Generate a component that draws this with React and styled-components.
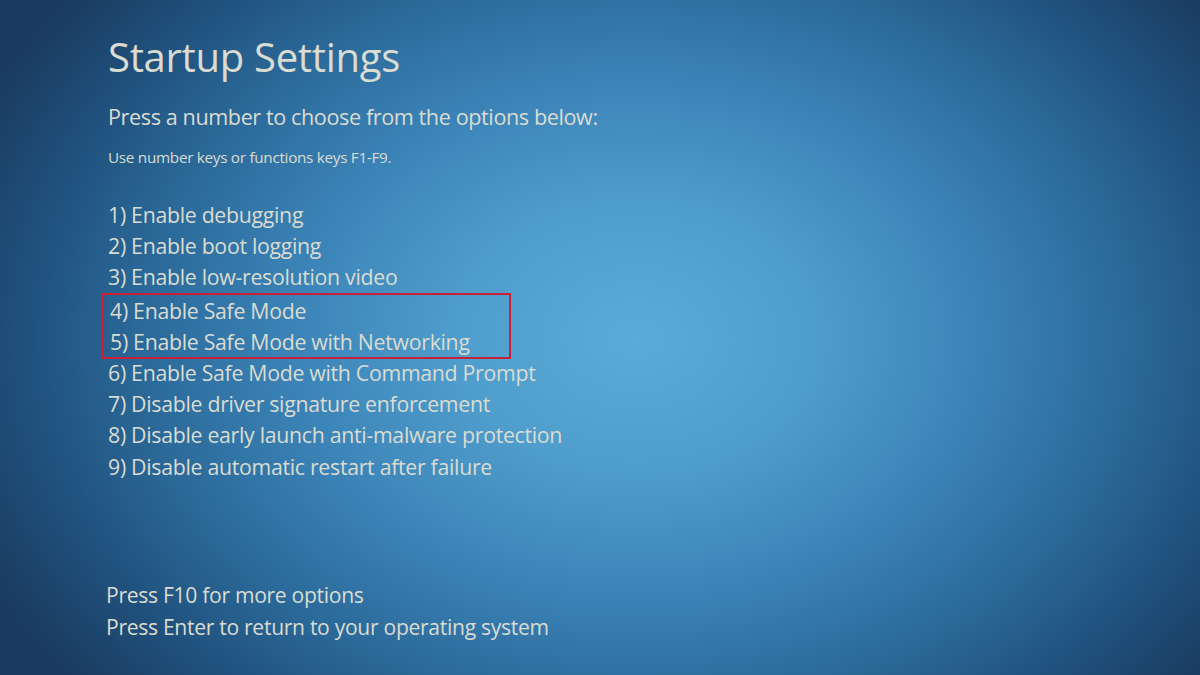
import React from 'react';
import styled, { createGlobalStyle } from 'styled-components';

const GlobalStyle = createGlobalStyle`
    html, body {
        margin : 0;
        padding : 0;
        background : #1c4468;
    }
    * {
        box-sizing : border-box;
    }
`;

const options = [
    { key: 1, label: 'Enable debugging' },
    { key: 2, label: 'Enable boot logging' },
    { key: 3, label: 'Enable low-resolution video' },
    { key: 4, label: 'Enable Safe Mode', marked: true },
    { key: 5, label: 'Enable Safe Mode with Networking', marked: true },
    { key: 6, label: 'Enable Safe Mode with Command Prompt' },
    { key: 7, label: 'Disable driver signature enforcement' },
    { key: 8, label: 'Disable early launch anti-malware protection' },
    { key: 9, label: 'Disable automatic restart after failure' },
];

const App = () => {
    const before = options.filter((o) => o.key < 4);
    const marked = options.filter((o) => o.marked);
    const after = options.filter((o) => o.key > 5);

    return (
        <>
            <GlobalStyle />
            <Screen>
                <Title>Startup Settings</Title>
                <Lead>Press a number to choose from the options below:</Lead>
                <Hint>Use number keys or functions keys F1-F9.</Hint>
                <OptionList>
                    {before.map((o) => (
                        <Option key={o.key}>{o.key}) {o.label}</Option>
                    ))}
                    <Highlight>
                        {marked.map((o) => (
                            <Option key={o.key}>{o.key}) {o.label}</Option>
                        ))}
                    </Highlight>
                    {after.map((o) => (
                        <Option key={o.key}>{o.key}) {o.label}</Option>
                    ))}
                </OptionList>
                <Footer>
                    <FooterLine>Press F10 for more options</FooterLine>
                    <FooterLine>Press Enter to return to your operating system</FooterLine>
                </Footer>
            </Screen>
        </>
    );
};

export default App;

const Screen = styled.div`
    width : 1200px;
    height : 675px;
    overflow : hidden;
    display : flex;
    flex-direction : column;
    padding : 32px 0 0 108px;
    color : #dadcd1;
    font-family : 'Open Sans', 'Noto Sans', sans-serif;
    background :
        radial-gradient(ellipse 60% 80% at 53% 50%, #5caad7 0%, #4f9dcc 25%, #3b83b7 48%, #2b6a9a 68%, #1f4f7b 86%, #1a3c60 100%);
`;

const Title = styled.h1`
    margin : 0;
    font-size : 40px;
    line-height : 50px;
    font-weight : 400;
    letter-spacing : -0.3px;
`;

const Lead = styled.p`
    margin : 21px 0 0 0;
    font-size : 21.6px;
    line-height : 28px;
    letter-spacing : -0.4px;
`;

const Hint = styled.p`
    margin : 16px 0 0 0;
    font-size : 15.3px;
    line-height : 20px;
    letter-spacing : -0.3px;
`;

const OptionList = styled.div`
    margin-top : 32px;
    display : flex;
    flex-direction : column;
`;

const Highlight = styled.div`
    margin : 0 0 -2px -7px;
    width : 410px;
    padding-left : 7px;
    border : 2px solid #c92038;
`;

const Option = styled.div`
    font-size : 21.3px;
    line-height : 31.2px;
    letter-spacing : -0.3px;
    white-space : nowrap;
`;

const Footer = styled.div`
    margin-top : auto;
    margin-left : -2px;
    margin-bottom : 33px;
    display : flex;
    flex-direction : column;
`;

const FooterLine = styled.div`
    font-size : 21.1px;
    line-height : 31.4px;
    letter-spacing : -0.3px;
`;
